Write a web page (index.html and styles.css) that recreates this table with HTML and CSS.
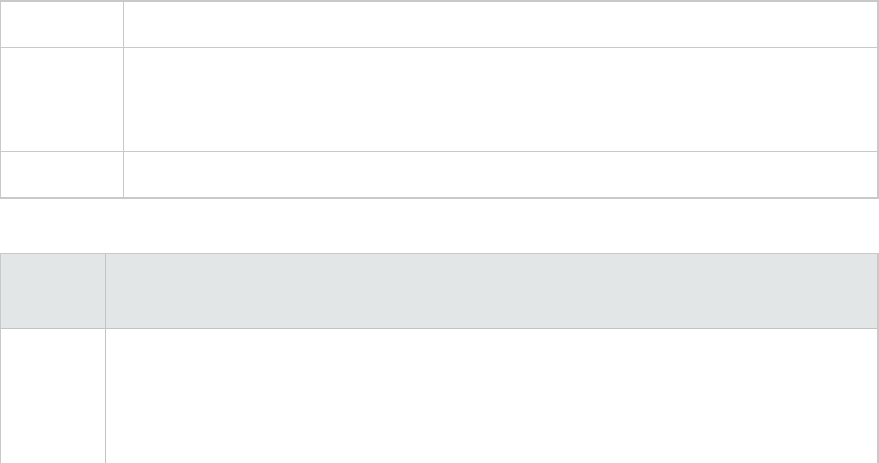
FILE: index.html
```html
<!DOCTYPE html>
<html>
<head>
<meta charset="utf-8">
<link rel="stylesheet" href="styles.css">
</head>
<body>
<div class="page">
  <table class="tbl tbl-info">
    <tr class="r-short"><td class="c-key"></td><td class="c-val"></td></tr>
    <tr class="r-tall"><td class="c-key"></td><td class="c-val"></td></tr>
    <tr class="r-short"><td class="c-key"></td><td class="c-val"></td></tr>
  </table>
  <table class="tbl tbl-data">
    <tr class="r-head"><th class="c-key2"></th><th class="c-val"></th></tr>
    <tr class="r-body"><td class="c-key2"></td><td class="c-val"></td></tr>
  </table>
</div>
</body>
</html>
```
FILE: styles.css
```css
html, body {
  margin: 0;
  padding: 0;
  background: #ffffff;
  font-family: "Open Sans", "Liberation Sans", sans-serif;
  overflow: hidden;
}
.page {
  width: 879px;
}
.tbl {
  border-collapse: separate;
  border-spacing: 0;
  width: 879px;
  table-layout: fixed;
}
.tbl td, .tbl th {
  padding: 0;
  border: 0;
}
.tbl-info {
  border-top: 2px solid #c9c9c9;
  border-left: 1px solid #c9c9c9;
  border-right: 2px solid #c9c9c9;
  border-bottom: 2px solid #c9c9c9;
}
.tbl-info .c-key {
  width: 122px;
  border-right: 1px solid #c9c9c9;
}
.tbl-info tr + tr td {
  border-top: 1px solid #c9c9c9;
}
.r-short td { height: 45px; }
.tr-fix {}
.tbl-info .r-tall td { height: 103px; }
.tbl-info tr + tr.r-short td { height: 45px; }

.tbl-data {
  margin-top: 54px;
  border-top: 1px solid #c9c9c9;
  border-left: 1px solid #c9c9c9;
  border-right: 2px solid #c9c9c9;
}
.tbl-data .c-key2 {
  width: 104px;
  border-right: 1px solid #c3c3c3;
}
.r-head th {
  height: 74px;
  background: #e2e6e7;
  border-bottom: 1px solid #c3c3c3;
}
.r-body td {
  height: 140px;
}
```
